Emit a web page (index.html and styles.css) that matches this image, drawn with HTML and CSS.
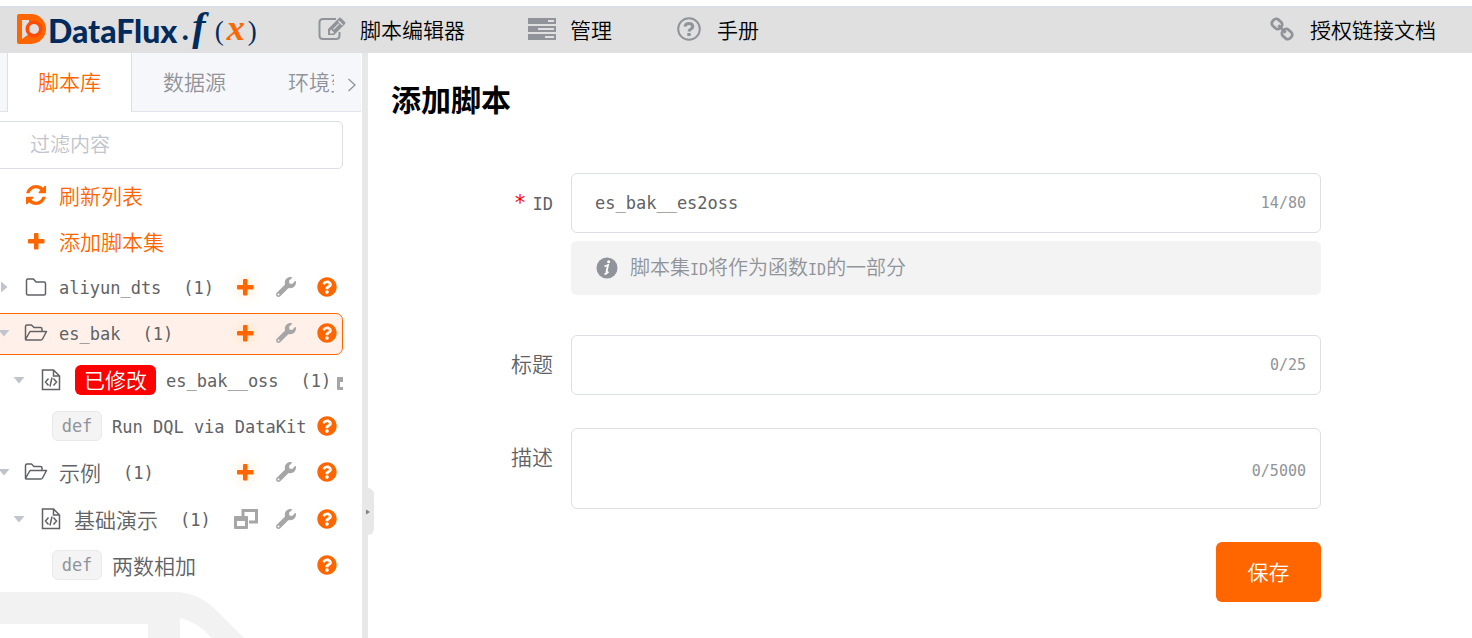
FILE: index.html
```html
<!DOCTYPE html>
<html lang="zh-CN">
<head>
  <meta charset="UTF-8" />
  <meta name="viewport" content="width=device-width, initial-scale=1.0" />
  <title>DataFlux.f(x)</title>
  <link rel="stylesheet" href="styles.css">
</head>
<body>
  <!-- shared icons -->
  <svg class="sprite" aria-hidden="true">
    <symbol id="i-help" viewBox="0 0 512 512"><path d="M504 256c0 136.997-111.043 248-248 248S8 392.997 8 256C8 119.083 119.043 8 256 8s248 111.083 248 248zM262.655 90c-54.497 0-89.255 22.957-116.549 63.758-3.536 5.286-2.353 12.415 2.715 16.258l34.699 26.31c5.205 3.947 12.621 3.008 16.665-2.122 17.864-22.658 30.113-35.797 57.303-35.797 20.429 0 45.698 13.148 45.698 32.958 0 14.976-12.363 22.667-32.534 33.976C247.128 238.528 216 254.941 216 296v4c0 6.627 5.373 12 12 12h56c6.627 0 12-5.373 12-12v-1.333c0-28.462 83.186-29.647 83.186-106.667 0-58.002-60.165-102-116.531-102zM256 338c-25.365 0-46 20.635-46 46 0 25.364 20.635 46 46 46s46-20.636 46-46c0-25.364-20.635-46-46-46z"/></symbol>
    <symbol id="i-wrench" viewBox="0 0 512 512"><path d="M507.73 109.1c-2.24-9.03-13.54-12.09-20.12-5.51l-74.36 74.36-67.88-11.31-11.31-67.88 74.36-74.36c6.62-6.62 3.43-17.9-5.66-20.16-47.38-11.74-99.55.91-136.58 37.93-39.64 39.64-50.55 97.1-34.05 147.2L18.74 402.76c-24.99 24.99-24.99 65.51 0 90.5 24.99 24.99 65.51 24.99 90.5 0l213.21-213.21c50.12 16.71 107.47 5.68 147.37-34.22 37.07-37.07 49.7-89.32 37.91-136.73zM64 472c-13.25 0-24-10.75-24-24 0-13.26 10.75-24 24-24s24 10.74 24 24c0 13.25-10.75 24-24 24z"/></symbol>
    <symbol id="i-plus" viewBox="0 0 20 20"><path d="M9 2h2.500q1 0 1 1v5h5q1 0 1 1v2.500q0 1-1 1h-5v5q0 1-1 1H9q-1 0-1-1v-5H3q-1 0-1-1V9q0-1 1-1h5V3q0-1 1-1z"/></symbol>
    <symbol id="i-refresh" viewBox="0 0 1536 1536"><path d="M1511 928q0 5-1 7-64 268-268 434.500t-478 166.500q-146 0-282.500-55t-243.500-157l-129 129q-19 19-45 19t-45-19-19-45v-448q0-26 19-45t45-19h448q26 0 45 19t19 45-19 45l-137 137q71 66 161 102t187 36q134 0 250-65t186-179q11-17 53-117 8-23 30-23h192q13 0 22.500 9.500t9.500 22.500zm25-800v448q0 26-19 45t-45 19h-448q-26 0-45-19t-19-45 19-45l138-138q-148-137-349-137-134 0-250 65t-186 179q-11 17-53 117-8 23-30 23h-199q-13 0-22.500-9.500t-9.500-22.500v-7q65-268 270-434.500t480-166.500q146 0 284 55.500t245 156.500l130-129q19-19 45-19t45 19 19 45z"/></symbol>
    <symbol id="i-folder" viewBox="0 0 24 20"><path d="M3 2h6.500l2.500 3h8q1.500 0 1.500 1.500v10q0 1.500-1.500 1.500H4q-1.500 0-1.500-1.500V3.500Q2.500 2 4 2z" fill="none" stroke="currentColor" stroke-width="1.500"/></symbol>
    <symbol id="i-folder-open" viewBox="0 0 24 20"><path d="M1.500 16.500V3.500Q1.500 2 3 2h4.500l2.500 2.500h6.500q1.500 0 1.500 1.500v2.500M1.500 16.500L6 8.500h16.500L18.500 16q-.5 1-1.500 1H2z" fill="none" stroke="currentColor" stroke-width="1.500" stroke-linejoin="round"/></symbol>
    <symbol id="i-file" viewBox="0 0 24 24"><path d="M3.500 2h11l6 6v13.500h-17zM14.500 2v6h6M9.500 10.500L6.500 14l3 3.500M14.500 10.500l3 3.500-3 3.500M13 9.500l-2 9" fill="none" stroke="currentColor" stroke-width="1.500"/></symbol>
    <symbol id="i-clone" viewBox="0 0 24 20"><path d="M9 7V1.500h13.500V13H15" fill="none" stroke="currentColor" stroke-width="3"/><path fill-rule="evenodd" d="M1 7h12q1 0 1 1v11q0 1-1 1H1q-1 0-1-1V8q0-1 1-1zm2 5v5h8v-5z"/></symbol>
    <symbol id="i-caret" viewBox="0 0 12 12"><path d="M0.500 3h11L6 9.500z"/></symbol>
  </svg>

  <header class="topbar">
    <a class="logo" href="#" aria-label="DataFlux.f(x)">
      <svg class="logo-mark" viewBox="0 0 29 30" aria-hidden="true">
        <path d="M2 0h12a15 15 0 0 1 0 30H2q-2 0-2-2V2q0-2 2-2z" fill="#f60"/>
        <path d="M5 6h7v4a7 7 0 0 0 0 10l-7 5z" fill="#e0e0e0"/>
        <circle cx="17" cy="15" r="8.500" fill="#ff4b08"/>
        <circle cx="17" cy="15" r="5" fill="#e0e0e0"/>
      </svg>
      <span class="logo-name">DataFlux</span>
      <span class="logo-fx">.<i>f</i><small>(</small><b>x</b><small>)</small></span>
    </a>
    <nav class="menu">
      <a href="#">
        <svg viewBox="0 0 28 24" aria-hidden="true"><path d="M18 2H5Q1.500 2 1.500 5.500v13Q1.500 22 5 22h13q3.500 0 3.500-3.500V15" fill="none" stroke="currentColor" stroke-width="2"/><path fill-rule="evenodd" d="M10 18v-6L21 1q1-1 2 0l4 4q1 1 0 2L16 18zm2-4v2.500h3L16 15.500 13 12.500zm3-2l.8.8 5.700-5.700-.8-.8zM20 4.500l4 4 1-1-4-4z"/></svg>
        脚本编辑器
      </a>
      <a href="#">
        <svg viewBox="0 0 28 24" aria-hidden="true"><path fill-rule="evenodd" d="M0 1h28v6H0zm20 2v2h6V3zM0 9h28v6H0zm10 2v2h16v-2zM0 17h28v6H0zm17 2v2h9v-2z"/></svg>
        管理
      </a>
      <a href="#">
        <svg viewBox="0 0 28 24" aria-hidden="true"><circle cx="14" cy="12" r="10.800" fill="none" stroke="currentColor" stroke-width="2"/><path d="M10 9.500Q10.500 6.500 14 6.500t3.800 3Q17.800 11 16 12t-2 2.500" fill="none" stroke="currentColor" stroke-width="3"/><path d="M12.300 16h3.400v3h-3.400z"/></svg>
        手册
      </a>
    </nav>
    <nav class="menu menu-right">
      <a href="#">
        <svg viewBox="0 0 28 26" aria-hidden="true"><g fill="none" stroke="currentColor" stroke-width="3"><rect x="3" y="3" width="11" height="9" rx="3.500" transform="rotate(42 8.500 7.500)"/><rect x="14" y="14" width="11" height="9" rx="3.500" transform="rotate(42 19.500 18.500)"/><path d="M10 9l8 8"/></g></svg>
        授权链接文档
      </a>
    </nav>
  </header>

  <div class="layout">
    <aside class="sidebar">
      <div class="tabs">
        <div class="tabs-scroll" role="tablist">
          <button class="tab active" role="tab" aria-selected="true">脚本库</button>
          <button class="tab" role="tab">数据源</button>
          <button class="tab" role="tab">环境变量</button>
        </div>
        <button class="tabs-next" aria-label="下一个">
          <svg viewBox="0 0 10 16" aria-hidden="true"><path d="M1.500 2l6.500 6-6.500 6" fill="none" stroke="currentColor" stroke-width="1.300"/></svg>
        </button>
      </div>

      <div class="tree">
        <input class="filter" type="text" placeholder="过滤内容" aria-label="过滤内容">

        <button class="row link"><svg class="icon small" aria-hidden="true"><use href="#i-refresh"/></svg>刷新列表</button>
        <button class="row link"><svg class="icon small" aria-hidden="true"><use href="#i-plus"/></svg>添加脚本集</button>

        <div class="row">
          <svg class="caret closed" aria-hidden="true"><use href="#i-caret"/></svg>
          <svg class="icon" aria-hidden="true"><use href="#i-folder"/></svg>
          <span class="mono">aliyun_dts</span><span class="mono count">(1)</span>
          <div class="actions">
            <button class="act add" aria-label="添加"><svg><use href="#i-plus"/></svg></button>
            <button class="act" aria-label="设置"><svg><use href="#i-wrench"/></svg></button>
            <button class="act help" aria-label="帮助"><svg><use href="#i-help"/></svg></button>
          </div>
        </div>

        <div class="row selected">
          <svg class="caret" aria-hidden="true"><use href="#i-caret"/></svg>
          <svg class="icon" aria-hidden="true"><use href="#i-folder-open"/></svg>
          <span class="mono">es_bak</span><span class="mono count">(1)</span>
          <div class="actions">
            <button class="act add" aria-label="添加"><svg><use href="#i-plus"/></svg></button>
            <button class="act" aria-label="设置"><svg><use href="#i-wrench"/></svg></button>
            <button class="act help" aria-label="帮助"><svg><use href="#i-help"/></svg></button>
          </div>
        </div>

        <div class="row script">
          <svg class="caret" aria-hidden="true"><use href="#i-caret"/></svg>
          <svg class="icon" aria-hidden="true"><use href="#i-file"/></svg>
          <span class="badge">已修改</span>
          <span class="mono">es_bak__oss</span><span class="mono count">(1)</span>
          <div class="actions">
            <button class="act clone" aria-label="打开"><svg><use href="#i-clone"/></svg></button>
          </div>
        </div>

        <div class="row func">
          <span class="def">def</span>
          <span class="mono">Run DQL via DataKit</span>
          <div class="actions">
            <button class="act help" aria-label="帮助"><svg><use href="#i-help"/></svg></button>
          </div>
        </div>

        <div class="row">
          <svg class="caret" aria-hidden="true"><use href="#i-caret"/></svg>
          <svg class="icon" aria-hidden="true"><use href="#i-folder-open"/></svg>
          <span>示例</span><span class="mono count">(1)</span>
          <div class="actions">
            <button class="act add" aria-label="添加"><svg><use href="#i-plus"/></svg></button>
            <button class="act" aria-label="设置"><svg><use href="#i-wrench"/></svg></button>
            <button class="act help" aria-label="帮助"><svg><use href="#i-help"/></svg></button>
          </div>
        </div>

        <div class="row script">
          <svg class="caret" aria-hidden="true"><use href="#i-caret"/></svg>
          <svg class="icon" aria-hidden="true"><use href="#i-file"/></svg>
          <span>基础演示</span><span class="mono count">(1)</span>
          <div class="actions">
            <button class="act clone" aria-label="打开"><svg><use href="#i-clone"/></svg></button>
            <button class="act" aria-label="设置"><svg><use href="#i-wrench"/></svg></button>
            <button class="act help" aria-label="帮助"><svg><use href="#i-help"/></svg></button>
          </div>
        </div>

        <div class="row func">
          <span class="def">def</span>
          <span>两数相加</span>
          <div class="actions">
            <button class="act help" aria-label="帮助"><svg><use href="#i-help"/></svg></button>
          </div>
        </div>
      </div>

      <svg class="watermark" viewBox="0 0 260 46" aria-hidden="true">
        <path d="M0 0h175q24 0 43 20l26 26h-32q-16-17-32-20v20h-32V32H0z" fill="#f2f2f2"/>
        <path d="M180 46V34q8 2 19 12z" fill="#fff"/>
      </svg>
    </aside>

    <div class="splitter">
      <button class="handle" aria-label="收起侧栏"><svg viewBox="0 0 6 8" aria-hidden="true"><path d="M1 1.500l4 2.500-4 2.500z"/></svg></button>
    </div>

    <main class="main">
      <h1>添加脚本</h1>
      <form class="form">
        <label class="required" for="script-id"><span class="mono">ID</span></label>
        <div>
          <div class="field">
            <input id="script-id" type="text" value="es_bak__es2oss">
            <span class="counter">14/80</span>
          </div>
          <p class="note">
            <svg viewBox="0 0 22 22" aria-hidden="true"><circle cx="11" cy="11" r="10.500" fill="#909399"/><path d="M8.500 9.500q2-1 3.500-1.500L10.500 15q-.2 1.500 2-.2M8.500 17q1.800 0 3-1.500" fill="none" stroke="#fff" stroke-width="1.800"/><circle cx="12.600" cy="4.800" r="1.500" fill="#fff"/></svg>
            <span>脚本集<span class="note-id">ID</span>将作为函数<span class="note-id">ID</span>的一部分</span>
          </p>
        </div>

        <label for="script-title">标题</label>
        <div class="field">
          <input id="script-title" type="text">
          <span class="counter">0/25</span>
        </div>

        <label for="script-desc">描述</label>
        <div class="field">
          <textarea id="script-desc"></textarea>
          <span class="counter">0/5000</span>
        </div>

        <button class="save" type="button">保存</button>
      </form>
    </main>
  </div>
</body>
</html>
```
FILE: styles.css
```css
* {
  box-sizing: border-box;
}

body {
  margin: 0;
  padding-top: 6px;
  min-height: 100vh;
  display: flex;
  flex-direction: column;
  background: #fff;
  color: #606266;
  font-family: "Noto Sans CJK SC", sans-serif;
  font-size: 21px;
  font-weight: 350;
  line-height: 30px;
}

button,
input,
textarea {
  font: inherit;
  color: inherit;
}

button {
  padding: 0;
  border: none;
  background: none;
  cursor: pointer;
}

svg {
  display: block;
  flex: none;
  fill: currentColor;
}

.sprite {
  position: absolute;
  width: 0;
  height: 0;
}

.mono {
  font-family: "DejaVu Sans Mono", monospace;
  font-size: 17px;
  white-space: pre;
}

/* top bar */
.topbar {
  display: flex;
  align-items: center;
  height: 47px;
  padding: 0 36px 4px 17px;
  background: #e0e0e0;
  border-top: 2px solid #dcdfe6;
}

.logo {
  display: flex;
  align-items: center;
  width: 301px;
  color: #002b5c;
  text-decoration: none;
}

.logo-mark {
  width: 29px;
  height: 30px;
}

.logo-name {
  margin-left: 2px;
  padding-top: 4px;
  font-family: Lato, sans-serif;
  font-size: 32px;
  font-weight: 900;
}

.logo-fx {
  display: flex;
  align-items: baseline;
  margin-left: 3px;
  font-family: "Liberation Serif", serif;
  font-size: 40px;
}

.logo-fx i {
  margin: 0 9px 0 2px;
  font-weight: bold;
}

.logo-fx small {
  font-size: 27px;
}

.logo-fx b {
  margin: 0 3px;
  color: #f60;
  font-size: 36px;
  font-style: italic;
}

.menu {
  display: flex;
  gap: 63px;
}

.menu-right {
  margin-left: auto;
}

.menu a {
  display: flex;
  align-items: center;
  gap: 14px;
  color: #000;
  text-decoration: none;
}

.menu svg {
  width: 28px;
  height: 24px;
  color: #909399;
}

.layout {
  display: flex;
  flex: 1;
}

/* sidebar */
.sidebar {
  position: relative;
  flex: none;
  width: 362px;
  overflow: hidden;
}

.tabs {
  display: flex;
  height: 59px;
  margin-right: 1px;
  background: #f5f7fa;
  border-bottom: 1px solid #dfe4ed;
}

.tabs-scroll {
  display: flex;
  width: 334px;
  height: 59px;
  padding-left: 7px;
  overflow: hidden;
}

.tab {
  flex: none;
  height: 59px;
  padding: 0 31px 3px;
  color: #909399;
}

.tab.active {
  padding: 0 30px 3px;
  background: #fff;
  border: 1px solid #dcdfe6;
  border-width: 0 1px;
  color: #f60;
}

.tabs-next {
  display: flex;
  align-items: center;
  padding: 5px 0 0 13px;
  color: #909399;
}

.tabs-next svg {
  width: 10px;
  height: 16px;
}

.tree {
  position: relative;
  z-index: 1;
  width: 353px;
  margin: 9px 0 0 -10px;
}

.filter {
  display: block;
  width: 100%;
  height: 48px;
  margin-bottom: 4px;
  padding: 0 39px 3px;
  border: 1px solid #dcdfe6;
  border-radius: 5px;
  background: #fff;
  font-size: 20px;
}

.filter::placeholder {
  color: #c0c4cc;
}

.row {
  display: flex;
  align-items: center;
  width: 100%;
  height: 46px;
  padding: 0 0 2px 8px;
  overflow: hidden;
  white-space: nowrap;
}

.row > * {
  flex: none;
}

.row > .mono {
  padding-top: 2px;
}

.row.link {
  padding-left: 34px;
  color: #f60;
}

.row.selected {
  height: 42px;
  margin: 2px 0;
  padding-left: 7px;
  background: #fff1ea;
  border: 1px solid #f60;
  border-radius: 7px;
}

.row.script {
  height: 47px;
  padding-left: 23px;
}

.row.func {
  padding-left: 62px;
}

.caret {
  width: 12px;
  height: 12px;
  margin-right: 14px;
  color: #c0c4cc;
}

.caret.closed {
  transform: rotate(-90deg);
}

.icon {
  width: 24px;
  height: 24px;
  margin-right: 11px;
}

.icon.small {
  width: 20px;
  height: 20px;
  margin: 0 13px 0 2px;
}

.count {
  margin-left: 22px;
}

.badge {
  margin: 0 10px 0 1px;
  padding: 0 9px 2px;
  border-radius: 6px;
  background: #f00;
  color: #fff;
  line-height: 28px;
}

.def {
  width: 50px;
  margin-right: 10px;
  border: 1px solid #e9e9eb;
  border-radius: 6px;
  background: #f4f4f5;
  color: #909399;
  font-family: "DejaVu Sans Mono", monospace;
  font-size: 17px;
  line-height: 28px;
  text-align: center;
}

.actions {
  display: flex;
  gap: 21px;
  margin-left: auto;
  padding: 0 6px;
}

.selected .actions {
  padding-right: 5px;
}

.act {
  color: #a6a6a6;
}

.act svg {
  width: 20px;
  height: 20px;
}

.act.clone {
  margin-right: -3px;
}

.act.clone svg {
  width: 24px;
}

.act.help,
.act.add {
  color: #f60;
}

.act.add svg {
  overflow: visible;
  filter: drop-shadow(0 0 6px #ffdca8);
}

.watermark {
  position: absolute;
  left: 0;
  bottom: 0;
  width: 260px;
  height: 46px;
}

.splitter {
  position: relative;
  flex: none;
  width: 6px;
  background: #e8e8e8;
}

.handle {
  position: absolute;
  top: 435px;
  left: 0;
  width: 12px;
  height: 47px;
  padding-left: 3px;
  border-radius: 0 6px 6px 0;
  background: #e8e8e8;
  color: #808080;
}

.handle svg {
  width: 6px;
  height: 8px;
}

/* form */
.main {
  flex: 1;
  min-width: 0;
  padding: 23px 23px 24px;
}

h1 {
  margin: 0 0 52px;
  color: #000;
  font-size: 30px;
  font-weight: bold;
  line-height: 45px;
}

.form {
  display: grid;
  grid-template-columns: 162px 1fr;
  gap: 33px 18px;
  max-width: 930px;
}

.form label {
  line-height: 56px;
  text-align: right;
}

.required::before {
  content: "*";
  margin-right: 6px;
  color: #f00;
  font-family: "DejaVu Sans Mono", monospace;
}

.field {
  position: relative;
}

.field input,
.field textarea {
  display: block;
  width: 100%;
  height: 60px;
  padding: 0 90px 0 23px;
  border: 1px solid #dcdfe6;
  border-radius: 6px;
  background: #fff;
  font-family: "DejaVu Sans Mono", "Noto Sans CJK SC", monospace;
  font-size: 17px;
}

.field textarea {
  height: 81px;
  padding-top: 14px;
  resize: none;
}

.counter {
  position: absolute;
  right: 15px;
  bottom: 15px;
  color: #909399;
  font-family: "DejaVu Sans Mono", monospace;
  font-size: 15px;
}

textarea + .counter {
  bottom: 23px;
}

.note {
  display: flex;
  align-items: center;
  gap: 12px;
  height: 54px;
  margin: 8px 0 7px;
  padding: 0 25px;
  border-radius: 6px;
  background: #f3f3f3;
  color: #909399;
  font-size: 20px;
}

.note svg {
  width: 22px;
  height: 22px;
}

.note-id {
  font-family: "DejaVu Sans Mono", monospace;
  font-size: 15px;
}

.save {
  grid-column: 2;
  justify-self: end;
  width: 105px;
  height: 60px;
  padding-bottom: 2px;
  border-radius: 6px;
  background: #f60;
  color: #fff;
}
```
